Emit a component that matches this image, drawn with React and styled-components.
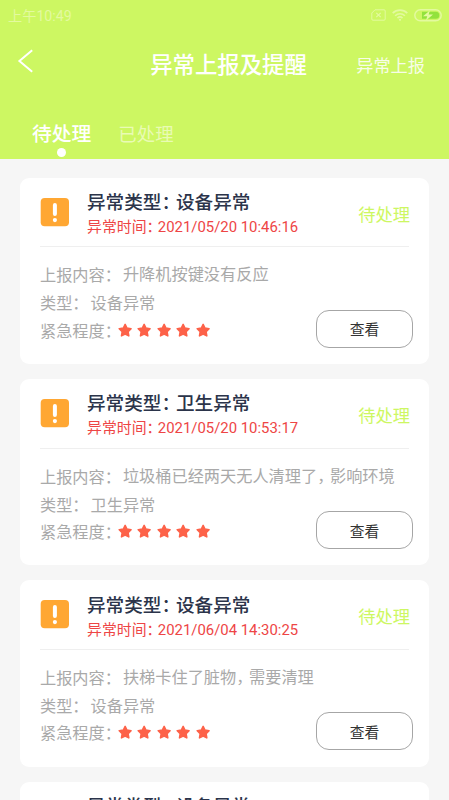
import React from 'react';
import styled, {createGlobalStyle, css} from 'styled-components';

const GlobalStyle = createGlobalStyle`
  * {
    box-sizing: border-box;
  }
  body {
    margin: 0;
    height: 800px;
    overflow: hidden;
    background: #f6f6f6;
    font-family: Roboto, "Noto Sans CJK SC", sans-serif;
  }
`;

const Screen = styled.div`
  width: 449px;
  height: 800px;
  overflow: hidden;
  background: #f6f6f6;
`;

const Header = styled.header`
  height: 159px;
  background: #cdf762;
  color: #fff;
`;

const StatusBar = styled.div`
  display: flex;
  align-items: center;
  justify-content: space-between;
  height: 30px;
  padding: 0 7px 0 8px;
  font-size: 14.2px;
  color: #e3fa9f;
`;

const StatusIcons = styled.div`
  display: flex;
  align-items: center;
  gap: 6px;
`;

const NavBar = styled.div`
  display: grid;
  grid-template-columns: 100px 1fr 100px;
  align-items: center;
  height: 68px;
  padding: 0 24px 0 17px;

  > svg {
    margin-bottom: 6px;
  }
`;

const NavTitle = styled.h1`
  margin: 0;
  padding: 1px 0 0 15px;
  font-size: 22.4px;
  font-weight: 500;
  line-height: 30px;
  text-align: center;
  white-space: nowrap;
`;

const NavAction = styled.span`
  padding-top: 4px;
  font-size: 17.2px;
  line-height: 24px;
  text-align: right;
  white-space: nowrap;
  opacity: 0.85;
`;

const Tabs = styled.nav`
  display: flex;
  align-items: flex-start;
  gap: 27px;
  padding: 22px 0 0 32px;
`;

const Tab = styled.div`
  display: flex;
  flex-direction: column;
  align-items: center;
  padding-top: 1px;
  font-size: 18.4px;
  line-height: 28px;
  color: #e9fbb4;
  ${(props)=>props.$active && css`
    font-size: 19.8px;
    font-weight: 500;
    color: #fff;
    &::after {
      content: '';
      width: 9px;
      height: 9px;
      margin-top: -1px;
      border-radius: 50%;
      background: #fff;
    }
  `};
`;

const List = styled.main`
  display: flex;
  flex-direction: column;
  gap: 15px;
  padding: 19px 20px 0;
`;

const Card = styled.article`
  height: 186.2px;
  flex-shrink: 0;
  padding: 0 16px 0 20px;
  border-radius: 9px;
  background: #fff;
`;

const CardHead = styled.div`
  display: flex;
  align-items: center;
  height: 69.4px;
  margin-right: 4px;
  border-bottom: 1px solid #efefef;
`;

const CardInfo = styled.div`
  flex: 1;
  margin-left: 18px;
  padding-top: 4px;
  white-space: nowrap;
`;

const CardTitle = styled.div`
  padding-top: 1px;
  font-size: 18.6px;
  font-weight: 500;
  line-height: 25px;
  color: #2b344a;
`;

const CardTime = styled.div`
  font-size: 14.9px;
  line-height: 22px;
  color: #ee4545;
`;

// full-width punctuation set tighter than its em box
const Tight = styled.span`
  letter-spacing: -${(props)=>props.$by}px;
`;

const State = styled.span`
  padding-top: 5px;
  margin-right: -1px;
  font-size: 17.3px;
  line-height: 24px;
  color: #cdf762;
`;

const CardBody = styled.div`
  display: flex;
  flex-direction: column;
  padding-top: 13.6px;
  font-size: 16.2px;
  color: #a9a9a9;
  white-space: nowrap;
`;

const Row = styled.div`
  display: flex;
  align-items: center;
  height: ${(props)=>props.$height}px;
`;

const Value = styled.span`
  margin-left: 2px;
  padding-bottom: ${(props)=>props.$raised ? 2 : 0}px;
`;

const Footer = styled.div`
  display: flex;
  align-items: flex-start;
  justify-content: space-between;
`;

const Stars = styled.span`
  display: flex;
  gap: 5.2px;
  margin-left: 2.4px;
`;

const ViewButton = styled.button`
  width: 97px;
  height: 38px;
  margin-top: -7px;
  padding: 0;
  border: 1px solid #a6a6a6;
  border-radius: 13px;
  background: #fff;
  font-family: inherit;
  font-size: 14.8px;
  color: #333;
`;

const STAR_COUNT = 5;

const reports = [
  {id: 1, kind: '设备异常', time: '2021/05/20 10:46:16', content: '升降机按键没有反应'},
  {id: 2, kind: '卫生异常', time: '2021/05/20 10:53:17', content: '垃圾桶已经两天无人清理了，影响环境'},
  {id: 3, kind: '设备异常', time: '2021/06/04 14:30:25', content: '扶梯卡住了脏物，需要清理'},
  {id: 4, kind: '设备异常', time: '2021/06/04 14:32:08', content: '升降机按键没有反应'},
];

function NoSimIcon() {
  return (
    <svg width='15' height='12' viewBox='0 0 15 12' fill='none' stroke='currentColor'>
      <path d='M4 .8H13a1.2 1.2 0 0 1 1.2 1.2V10a1.2 1.2 0 0 1-1.2 1.2H2A1.2 1.2 0 0 1 .8 10V4Z' />
      <path d='M5.3 3.8l4.4 4.4M9.7 3.8L5.3 8.2' strokeWidth='1.2' />
    </svg>
  )
}

function WifiIcon() {
  return (
    <svg width='16' height='12' viewBox='0 0 16 12' fill='none' stroke='currentColor' strokeWidth='1.6'>
      <path d='M.7 4.1a10.4 10.4 0 0 1 14.6 0M3.1 6.7a7 7 0 0 1 9.8 0M5.5 9.1a3.6 3.6 0 0 1 5 0' />
      <circle cx='8' cy='10.8' r='1.1' fill='currentColor' stroke='none' />
    </svg>
  )
}

function BatteryIcon() {
  return (
    <svg width='28' height='13' viewBox='0 0 28 13'>
      <rect x='.8' y='.8' width='26.4' height='11' rx='5.5' fill='none' stroke='currentColor' strokeWidth='1.5' />
      <path d='M8 2.8H21.8a3.5 3.5 0 0 1 0 7H8Z' fill='#92e23c' />
      <path d='M15.8 1.5L9 7.2h4.2L12 11.6l7-6h-4.3Z' fill='#e3fa9f' />
    </svg>
  )
}

function BackIcon() {
  return (
    <svg width='18' height='24' viewBox='0 0 18 24' fill='none' stroke='#fff' strokeWidth='2'>
      <path d='M15.2 1.2L2.4 12l12.8 10.8' />
    </svg>
  )
}

function AlertIcon() {
  return (
    <svg width='29' height='29' viewBox='0 0 29 29'>
      <rect x='.7' y='0' width='28.3' height='28.3' rx='4' fill='#ffa733' />
      <path d='M14.9 6.9v9.2' stroke='#fff' strokeWidth='4' strokeLinecap='round' />
      <circle cx='14.9' cy='22.1' r='2.1' fill='#fff' />
    </svg>
  )
}

function StarIcon() {
  return (
    <svg width='14.3' height='14.6' viewBox='0 0 14 14'>
      <path
        d='M7 1.2l1.8 3.6 4 .6-2.9 2.9.7 4.2L7 10.6l-3.6 1.9.7-4.2L1.2 5.4l4-.6Z'
        fill='#fd6249'
        stroke='#fd6249'
        strokeWidth='1.5'
        strokeLinejoin='round'
      />
    </svg>
  )
}

function ContentText({text}) {
  const parts = text.split('，');
  return parts.map((part, i)=>(
    <React.Fragment key={i}>
      {i > 0 && <Tight $by={3.4}>，</Tight>}
      {part}
    </React.Fragment>
  ));
}

function ReportCard({report}) {
  return (
    <Card>
      <CardHead>
        <AlertIcon />
        <CardInfo>
          <CardTitle>异常类型<Tight $by={4}>：</Tight>{report.kind}</CardTitle>
          <CardTime>异常时间<Tight $by={3.7}>：</Tight>{report.time}</CardTime>
        </CardInfo>
        <State>待处理</State>
      </CardHead>
      <CardBody>
        <Row $height={27}>
          <span>上报内容：</span>
          <Value $raised><ContentText text={report.content} /></Value>
        </Row>
        <Row $height={29}>
          <span>类型：</span>
          <Value>{report.kind}</Value>
        </Row>
        <Footer>
          <Row $height={26}>
            <span>紧急程度<Tight $by={5.5}>：</Tight></span>
            <Stars>
              {Array.from({length: STAR_COUNT}, (_, i)=><StarIcon key={i} />)}
            </Stars>
          </Row>
          <ViewButton>查看</ViewButton>
        </Footer>
      </CardBody>
    </Card>
  )
}

function App() {
  return (
    <Screen>
      <GlobalStyle />
      <Header>
        <StatusBar>
          <span>上午10:49</span>
          <StatusIcons>
            <NoSimIcon />
            <WifiIcon />
            <BatteryIcon />
          </StatusIcons>
        </StatusBar>
        <NavBar>
          <BackIcon />
          <NavTitle>异常上报及提醒</NavTitle>
          <NavAction>异常上报</NavAction>
        </NavBar>
        <Tabs>
          <Tab $active>待处理</Tab>
          <Tab>已处理</Tab>
        </Tabs>
      </Header>
      <List>
        {reports.map((report)=><ReportCard key={report.id} report={report} />)}
      </List>
    </Screen>
  )
}

export default App;
